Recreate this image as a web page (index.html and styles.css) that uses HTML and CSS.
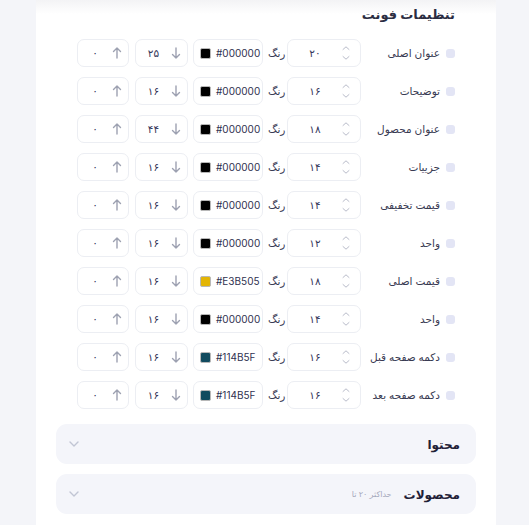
FILE: index.html
```html
<!DOCTYPE html>
<html lang="fa" dir="rtl">
<head>
<meta charset="utf-8">
<link rel="stylesheet" href="styles.css">
</head>
<body>
<div class="card">
  <section class="fonts">
    <h3 class="title">تنظیمات فونت</h3>
    <div class="rows">
      <div class="row">
        <div class="lbl"><span class="chk"></span><span>عنوان اصلی</span></div>
        <div class="box fs"><span class="num">۲۰</span><svg class="spin" viewBox="0 0 10 16"><path d="M2 4.5 5 1.8 8 4.5M2 11.5 5 14.2 8 11.5"/></svg></div>
        <span class="rang">رنگ</span>
        <div class="box color"><span class="sw" style="background:#000000"></span><span class="hex">#000000</span></div>
        <div class="box small"><span class="num">۲۵</span><svg class="arr" viewBox="0 0 10 12"><path d="M5 1v10M1.5 7.5 5 11l3.5-3.5"/></svg></div>
        <div class="box small"><span class="num">۰</span><svg class="arr" viewBox="0 0 10 12"><path d="M5 11V1M1.5 4.5 5 1l3.5 3.5"/></svg></div>
      </div>
      <div class="row">
        <div class="lbl"><span class="chk"></span><span>توضیحات</span></div>
        <div class="box fs"><span class="num">۱۶</span><svg class="spin" viewBox="0 0 10 16"><path d="M2 4.5 5 1.8 8 4.5M2 11.5 5 14.2 8 11.5"/></svg></div>
        <span class="rang">رنگ</span>
        <div class="box color"><span class="sw" style="background:#000000"></span><span class="hex">#000000</span></div>
        <div class="box small"><span class="num">۱۶</span><svg class="arr" viewBox="0 0 10 12"><path d="M5 1v10M1.5 7.5 5 11l3.5-3.5"/></svg></div>
        <div class="box small"><span class="num">۰</span><svg class="arr" viewBox="0 0 10 12"><path d="M5 11V1M1.5 4.5 5 1l3.5 3.5"/></svg></div>
      </div>
      <div class="row">
        <div class="lbl"><span class="chk"></span><span>عنوان محصول</span></div>
        <div class="box fs"><span class="num">۱۸</span><svg class="spin" viewBox="0 0 10 16"><path d="M2 4.5 5 1.8 8 4.5M2 11.5 5 14.2 8 11.5"/></svg></div>
        <span class="rang">رنگ</span>
        <div class="box color"><span class="sw" style="background:#000000"></span><span class="hex">#000000</span></div>
        <div class="box small"><span class="num">۴۴</span><svg class="arr" viewBox="0 0 10 12"><path d="M5 1v10M1.5 7.5 5 11l3.5-3.5"/></svg></div>
        <div class="box small"><span class="num">۰</span><svg class="arr" viewBox="0 0 10 12"><path d="M5 11V1M1.5 4.5 5 1l3.5 3.5"/></svg></div>
      </div>
      <div class="row">
        <div class="lbl"><span class="chk"></span><span>جزییات</span></div>
        <div class="box fs"><span class="num">۱۴</span><svg class="spin" viewBox="0 0 10 16"><path d="M2 4.5 5 1.8 8 4.5M2 11.5 5 14.2 8 11.5"/></svg></div>
        <span class="rang">رنگ</span>
        <div class="box color"><span class="sw" style="background:#000000"></span><span class="hex">#000000</span></div>
        <div class="box small"><span class="num">۱۶</span><svg class="arr" viewBox="0 0 10 12"><path d="M5 1v10M1.5 7.5 5 11l3.5-3.5"/></svg></div>
        <div class="box small"><span class="num">۰</span><svg class="arr" viewBox="0 0 10 12"><path d="M5 11V1M1.5 4.5 5 1l3.5 3.5"/></svg></div>
      </div>
      <div class="row">
        <div class="lbl"><span class="chk"></span><span>قیمت تخفیفی</span></div>
        <div class="box fs"><span class="num">۱۴</span><svg class="spin" viewBox="0 0 10 16"><path d="M2 4.5 5 1.8 8 4.5M2 11.5 5 14.2 8 11.5"/></svg></div>
        <span class="rang">رنگ</span>
        <div class="box color"><span class="sw" style="background:#000000"></span><span class="hex">#000000</span></div>
        <div class="box small"><span class="num">۱۶</span><svg class="arr" viewBox="0 0 10 12"><path d="M5 1v10M1.5 7.5 5 11l3.5-3.5"/></svg></div>
        <div class="box small"><span class="num">۰</span><svg class="arr" viewBox="0 0 10 12"><path d="M5 11V1M1.5 4.5 5 1l3.5 3.5"/></svg></div>
      </div>
      <div class="row">
        <div class="lbl"><span class="chk"></span><span>واحد</span></div>
        <div class="box fs"><span class="num">۱۲</span><svg class="spin" viewBox="0 0 10 16"><path d="M2 4.5 5 1.8 8 4.5M2 11.5 5 14.2 8 11.5"/></svg></div>
        <span class="rang">رنگ</span>
        <div class="box color"><span class="sw" style="background:#000000"></span><span class="hex">#000000</span></div>
        <div class="box small"><span class="num">۱۶</span><svg class="arr" viewBox="0 0 10 12"><path d="M5 1v10M1.5 7.5 5 11l3.5-3.5"/></svg></div>
        <div class="box small"><span class="num">۰</span><svg class="arr" viewBox="0 0 10 12"><path d="M5 11V1M1.5 4.5 5 1l3.5 3.5"/></svg></div>
      </div>
      <div class="row">
        <div class="lbl"><span class="chk"></span><span>قیمت اصلی</span></div>
        <div class="box fs"><span class="num">۱۸</span><svg class="spin" viewBox="0 0 10 16"><path d="M2 4.5 5 1.8 8 4.5M2 11.5 5 14.2 8 11.5"/></svg></div>
        <span class="rang">رنگ</span>
        <div class="box color"><span class="sw" style="background:#E3B505"></span><span class="hex">#E3B505</span></div>
        <div class="box small"><span class="num">۱۶</span><svg class="arr" viewBox="0 0 10 12"><path d="M5 1v10M1.5 7.5 5 11l3.5-3.5"/></svg></div>
        <div class="box small"><span class="num">۰</span><svg class="arr" viewBox="0 0 10 12"><path d="M5 11V1M1.5 4.5 5 1l3.5 3.5"/></svg></div>
      </div>
      <div class="row">
        <div class="lbl"><span class="chk"></span><span>واحد</span></div>
        <div class="box fs"><span class="num">۱۴</span><svg class="spin" viewBox="0 0 10 16"><path d="M2 4.5 5 1.8 8 4.5M2 11.5 5 14.2 8 11.5"/></svg></div>
        <span class="rang">رنگ</span>
        <div class="box color"><span class="sw" style="background:#000000"></span><span class="hex">#000000</span></div>
        <div class="box small"><span class="num">۱۶</span><svg class="arr" viewBox="0 0 10 12"><path d="M5 1v10M1.5 7.5 5 11l3.5-3.5"/></svg></div>
        <div class="box small"><span class="num">۰</span><svg class="arr" viewBox="0 0 10 12"><path d="M5 11V1M1.5 4.5 5 1l3.5 3.5"/></svg></div>
      </div>
      <div class="row">
        <div class="lbl"><span class="chk"></span><span>دکمه صفحه قبل</span></div>
        <div class="box fs"><span class="num">۱۶</span><svg class="spin" viewBox="0 0 10 16"><path d="M2 4.5 5 1.8 8 4.5M2 11.5 5 14.2 8 11.5"/></svg></div>
        <span class="rang">رنگ</span>
        <div class="box color"><span class="sw" style="background:#114B5F"></span><span class="hex">#114B5F</span></div>
        <div class="box small"><span class="num">۱۶</span><svg class="arr" viewBox="0 0 10 12"><path d="M5 1v10M1.5 7.5 5 11l3.5-3.5"/></svg></div>
        <div class="box small"><span class="num">۰</span><svg class="arr" viewBox="0 0 10 12"><path d="M5 11V1M1.5 4.5 5 1l3.5 3.5"/></svg></div>
      </div>
      <div class="row">
        <div class="lbl"><span class="chk"></span><span>دکمه صفحه بعد</span></div>
        <div class="box fs"><span class="num">۱۶</span><svg class="spin" viewBox="0 0 10 16"><path d="M2 4.5 5 1.8 8 4.5M2 11.5 5 14.2 8 11.5"/></svg></div>
        <span class="rang">رنگ</span>
        <div class="box color"><span class="sw" style="background:#114B5F"></span><span class="hex">#114B5F</span></div>
        <div class="box small"><span class="num">۱۶</span><svg class="arr" viewBox="0 0 10 12"><path d="M5 1v10M1.5 7.5 5 11l3.5-3.5"/></svg></div>
        <div class="box small"><span class="num">۰</span><svg class="arr" viewBox="0 0 10 12"><path d="M5 11V1M1.5 4.5 5 1l3.5 3.5"/></svg></div>
      </div>
    </div>
  </section>
  <div class="acc">
    <span class="acc-title">محتوا</span>
    <svg class="chev" viewBox="0 0 10 6"><path d="M1 1l4 4 4-4"/></svg>
  </div>
  <div class="acc">
    <span class="acc-title">محصولات</span>
    <span class="acc-sub">حداکثر ۲۰ تا</span>
    <svg class="chev" viewBox="0 0 10 6"><path d="M1 1l4 4 4-4"/></svg>
  </div>
</div>
</body>
</html>
```

FILE: styles.css
```css
* { box-sizing: border-box; }
html, body { margin: 0; padding: 0; }
body {
  background: #f4f5f9;
  font-family: Inter, "DejaVu Sans", sans-serif;
  color: #2b2d45;
  height: 525px;
  overflow: hidden;
}
.card {
  width: 460px;
  margin-right: 33px;
  height: 525px;
  background: linear-gradient(#f3f3f5 0, #ffffff 14px, #ffffff 100%);
  padding: 0 20px;
}
.fonts {
  padding: 0 21px;
}
.title {
  margin: 0;
  padding-top: 5px;
  height: 39px;
  font-size: 13px;
  font-weight: bold;
  color: #2b2d42;
  line-height: 18px;
}
.rows {
  display: flex;
  flex-direction: column;
  gap: 10px;
}
.row {
  display: flex;
  align-items: center;
  height: 28px;
  gap: 5px;
}
.lbl {
  flex: 1;
  display: flex;
  align-items: center;
  gap: 6px;
  font-size: 10.5px;
  color: #383a52;
  white-space: nowrap;
}
.chk {
  width: 9px;
  height: 9px;
  border-radius: 3px;
  background: #e3e5f5;
  flex: none;
}
.box {
  direction: ltr;
  height: 28px;
  border: 1px solid #eceef3;
  border-radius: 7px;
  background: #fff;
  display: flex;
  align-items: center;
  flex: none;
}
.num {
  flex: 1;
  text-align: center;
  font-size: 10.5px;
  color: #34365a;
}
.fs {
  width: 74px;
  padding-right: 9px;
}
.spin {
  width: 10px;
  height: 16px;
  fill: none;
  stroke: #b9bcca;
  stroke-width: 1;
  stroke-linecap: round;
  stroke-linejoin: round;
}
.rang {
  font-size: 10.5px;
  color: #3a3c55;
  margin: 0 -3px 0 0;
}
.color {
  width: 70px;
  padding: 0 5px 0 6px;
  gap: 5px;
}
.sw {
  width: 11px;
  height: 11px;
  border-radius: 2px;
  border: 1px solid #b8b8b8;
  flex: none;
}
.hex {
  font-size: 10px;
  color: #2f3150;
}
.small {
  width: 53px;
  padding-right: 6px;
}
.small + .small {
  width: 52px;
  margin-right: 1px;
}
.arr {
  width: 10px;
  height: 12px;
  fill: none;
  stroke: #9da1b1;
  stroke-width: 1.4;
  stroke-linecap: round;
  stroke-linejoin: round;
}
.acc {
  height: 40px;
  background: #f4f5fa;
  border-radius: 11px;
  display: flex;
  align-items: center;
  padding: 0 16px 0 13px;
  gap: 12px;
  margin-top: 15px;
}
.acc + .acc {
  margin-top: 10px;
}
.acc-title {
  font-size: 12px;
  font-weight: bold;
  color: #1f2137;
}
.acc-sub {
  font-size: 8px;
  color: #a4a8bb;
}
.chev {
  margin-right: auto;
  width: 10px;
  height: 6px;
  fill: none;
  stroke: #c1c5d4;
  stroke-width: 1.4;
  stroke-linecap: round;
  stroke-linejoin: round;
}
```
